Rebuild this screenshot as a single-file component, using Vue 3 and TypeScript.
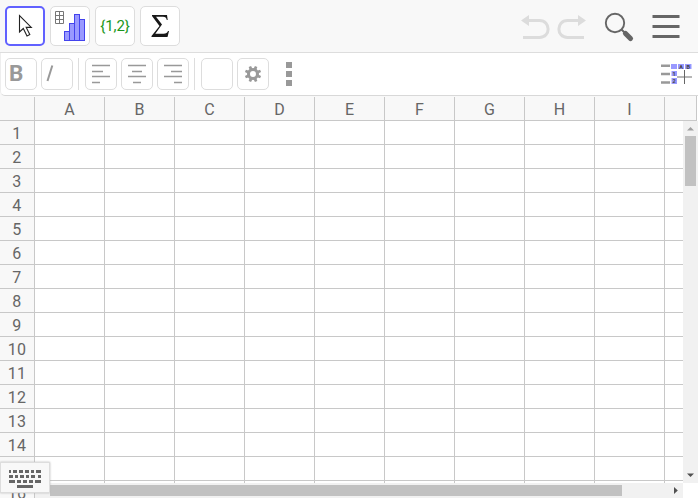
<script setup lang="ts">
const columns: string[] = ['A', 'B', 'C', 'D', 'E', 'F', 'G', 'H', 'I', '']
const rows: number[] = Array.from({ length: 16 }, (_, i) => i + 1)
const bars: number[][] = [
  [64, 31, 10],
  [69, 23, 18],
  [74, 14, 27],
  [79, 19, 22],
]
const alignments: string[] = [
  'M7 7.5H25M7 13.5H18M7 18.5H25M7 24.5H15',
  'M7 7.5H25M11 13.5H21M7 18.5H25M12 24.5H20',
  'M7 7.5H25M14 13.5H25M7 18.5H25M17 24.5H25',
]
</script>

<template>
  <div class="app">
    <header class="toolbar">
      <button class="tool selected">
        <svg width="40" height="40" viewBox="5 6 40 40">
          <path d="M19.5 15.5V32L23.3 28.5L27 36L29.8 34.6L26.2 27.4H31.3Z" fill="#fff" stroke="#222" stroke-width="1.1" />
        </svg>
      </button>
      <button class="tool">
        <svg width="40" height="40" viewBox="50 6 40 40">
          <path d="M55.5 11.5H63.5V23.5H55.5ZM59.5 11.5V23.5M55.5 15.5H63.5M55.5 19.5H63.5" fill="none" stroke="#777" />
          <rect v-for="b in bars" :key="b[0]" :x="b[0] + .5" :y="b[1] + .5" width="5" :height="b[2] - 1" fill="#9999ff" stroke="#4343ed" />
        </svg>
      </button>
      <button class="tool list">{1,2}</button>
      <button class="tool">
        <svg width="40" height="40" viewBox="140 6 40 40">
          <path d="M152 15H167L167.7 20H166.8C166.2 17.4 165.5 16.7 163 16.7H156L162 24.5L155.3 33.8H163.5C166.2 33.8 167.2 32.8 168 31H169L167.5 37H151.5V36L159.5 26L152 16Z" fill="#181818" />
        </svg>
      </button>
      <svg class="actions" width="170" height="52" viewBox="520 0 170 52">
        <g fill="none" stroke="#dcdcdc" stroke-width="3">
          <path d="M527 20.5H539.5C551 20.5 551 37.5 539.5 37.5H523" />
          <path d="M580 20.5H567.5C556 20.5 556 37.5 567.5 37.5H584" />
        </g>
        <path d="M521 20.5L529 15V26ZM586 20.5L578 15V26Z" fill="#dcdcdc" />
        <circle cx="615" cy="23" r="9.2" fill="none" stroke="#666" stroke-width="1.9" />
        <path d="M621.5 29.5L625 33" stroke="#666" stroke-width="2" />
        <path d="M625.5 33.5L630.5 38.5" stroke="#666" stroke-width="5.2" stroke-linecap="round" />
        <path d="M652.5 16.5H679.5M652.5 26.5H679.5M652.5 36.5H679.5" stroke="#666" stroke-width="3" />
      </svg>
    </header>

    <div class="stylebar">
      <button class="style bold">B</button>
      <button class="style italic"><svg width="32" height="32"><path d="M6.5 23L11.3 7.5" stroke="#999" stroke-width="2" /></svg></button>
      <i class="divider"></i>
      <button v-for="d in alignments" :key="d" class="style">
        <svg width="32" height="32"><path :d="d" stroke="#999" stroke-width="1.5" /></svg>
      </button>
      <i class="divider second"></i>
      <button class="style"></button>
      <button class="style">
        <svg width="32" height="32">
          <g transform="translate(16 16)">
            <circle r="4.5" fill="none" stroke="#999" stroke-width="3" />
            <path v-for="n in 8" :key="n" d="M-1.5 -5L-1.3 -8.2H1.3L1.5 -5Z" fill="#999" :transform="`rotate(${n * 45 - 22.5})`" />
          </g>
        </svg>
      </button>
      <div class="more"><i></i><i></i><i></i></div>
      <svg class="view" width="32" height="24" viewBox="660 62 32 24">
        <path d="M661 65.7H670M661 74H670M661 82.5H670" stroke="#999" stroke-width="2.6" />
        <path d="M671 64H677V69H671ZM678 64H684V69H678ZM685 64H691.5V69H685ZM671.5 71H677V76H671.5ZM671.5 78H677V84H671.5Z" fill="#9999ff" />
        <path d="M677 77H692" stroke="#aaa" stroke-width="1.7" />
        <path d="M684.5 70V84" stroke="#666" />
        <g class="tiny"><text x="679.2" y="68.8">A</text><text x="686.5" y="68.8">B</text><text x="672.6" y="75.8">1</text><text x="672.6" y="83.2">2</text></g>
      </svg>
    </div>

    <main class="sheet">
      <div class="column-head">
        <div class="corner"></div>
        <div v-for="(c, i) in columns" :key="i" class="column-label">{{ c }}</div>
      </div>
      <div class="body">
        <div class="grid">
          <div v-for="r in rows" :key="r" class="row">
            <div class="row-label">{{ r }}</div>
            <div v-for="(_, i) in columns" :key="i" class="cell"></div>
          </div>
        </div>
        <div class="v-scroll">
          <svg width="15" height="15"><path d="M4 9.5L7.5 6L11 9.5Z" fill="#a0a0a0" /></svg>
          <div class="v-thumb"></div>
          <svg class="down" width="15" height="15"><path d="M4 5.5L7.5 9L11 5.5Z" fill="#505050" /></svg>
        </div>
      </div>
      <div class="h-scroll">
        <div class="h-thumb"></div>
        <svg class="right" width="15" height="15"><path d="M6 4L9.8 7.5L6 11Z" fill="#505050" /></svg>
      </div>
    </main>

    <button class="keyboard">
      <svg width="48" height="29" viewBox="1 463 48 29">
        <g stroke="#666" stroke-width="3">
          <path d="M9 471.5H11M13 471.5H17M19 471.5H23M25 471.5H29M31 471.5H34M36 471.5H41" />
          <path d="M9 476.5H13M15 476.5H18M20 476.5H24M26 476.5H29M31 476.5H35M38 476.5H41" />
          <path d="M9 481.5H15M17 481.5H21M23 481.5H27M29 481.5H33M35 481.5H41" />
          <path d="M17 486.5H33" />
        </g>
      </svg>
    </button>
  </div>
</template>

<style>
body { background: #fff; overflow: hidden; }
</style>

<style scoped>
* { box-sizing: border-box; }
.app { position: relative; width: 698px; height: 498px; overflow: hidden; display: flex; flex-direction: column; background: #f8f8f8; font-family: Roboto, sans-serif; color: #666; }
svg { display: block; flex: none; }
button { padding: 0; margin: 0; font-family: inherit; background: #fff; border: 1px solid #ddd; display: flex; align-items: center; justify-content: center; }
.toolbar { height: 53px; flex: none; display: flex; gap: 5px; padding: 6px 8px 0 5px; border-bottom: 1px solid #ddd; }
.tool { width: 40px; height: 40px; border-radius: 5px; flex: none; }
.selected { border: 2px solid #6161ff; }
.list { color: #1b971b; font-size: 15px; letter-spacing: -.1px; }
.actions { margin: -6px 0 0 auto; }
.stylebar { height: 43px; flex: none; display: flex; background: #fff; padding: 5px 6px 0 4px; border-bottom: 1px solid #d8d8d8; border-left: 1px solid #eee; border-bottom-left-radius: 5px; }
.style { width: 32px; height: 32px; border-radius: 5px; margin-right: 4px; flex: none; overflow: hidden; }
.bold { color: #999; font-size: 22.5px; font-weight: 700; justify-content: flex-start; padding: 0 0 1px 3px; line-height: 27px; }
.divider { width: 1px; height: 32px; background: #ddd; margin: 0 6px 0 1px; flex: none; }
.second { margin-left: 1px; }
.more { display: flex; flex-direction: column; gap: 3px; margin: 4px 0 0 13px; }
.more i { width: 6px; height: 6px; background: #999; }
.view { margin: 4px 0 0 auto; }
.tiny { fill: #444; font-size: 5.5px; font-weight: 700; }
.sheet { flex: 1; min-height: 0; display: flex; flex-direction: column; background: #fff; }
.column-head { display: flex; height: 25px; flex: none; width: 697px; overflow: hidden; background: #f8f8f8; border-bottom: 1px solid #c8c8c8; border-right: 1px solid #c8c8c8; padding-top: 1px; }
.corner { width: 35px; flex: none; border-right: 1px solid #c8c8c8; }
.column-label { width: 70px; flex: none; border-right: 1px solid #c8c8c8; text-align: center; font-size: 16px; line-height: 25px; }
.body { height: 362px; flex: none; display: flex; }
.grid { width: 683px; height: 377px; overflow: hidden; flex: none; }
.row { height: 24px; display: flex; }
.row-label { width: 35px; flex: none; border-right: 1px solid #c8c8c8; border-bottom: 1px solid #c8c8c8; background: #f8f8f8; text-align: center; font-size: 16px; letter-spacing: .3px; line-height: 25px; }
.cell { width: 70px; flex: none; border-right: 1px solid #c8c8c8; border-bottom: 1px solid #c8c8c8; }
.v-scroll { width: 15px; height: 362px; background: #f1f1f1; display: flex; flex-direction: column; align-items: center; }
.v-thumb { width: 11px; height: 50px; background: #c1c1c1; }
.down { margin-top: auto; }
.h-scroll { position: relative; margin-left: 35px; width: 648px; height: 15px; background: #f1f1f1; display: flex; align-items: center; padding-left: 15px; flex: none; }
.h-thumb { width: 572px; height: 11px; background: #c1c1c1; }
.right { margin-left: auto; }
.keyboard { position: absolute; left: 0; top: 462px; width: 50px; height: 31px; background: #f8f8f8; box-shadow: 0 0 2px #bbb; }
</style>
